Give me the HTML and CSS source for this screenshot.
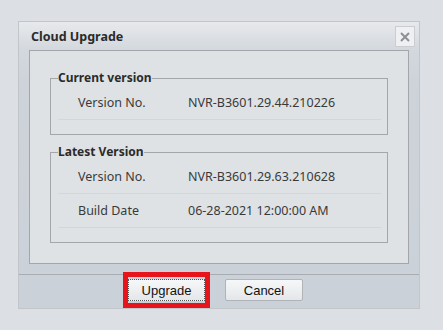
FILE: index.html
```html
<!DOCTYPE html>
<html lang="en">
<head>
  <meta charset="UTF-8">
  <title>Cloud Upgrade</title>
  <link rel="stylesheet" href="styles.css">
</head>
<body>
  <div class="dialog">
    <div class="title-bar">
      <span class="title">Cloud Upgrade</span>
      <button class="close-btn" title="Close">
        <svg width="10" height="10" viewBox="0 0 10 10"><path d="M1 1 L9 9 M9 1 L1 9" stroke="#8c9094" stroke-width="2"/></svg>
      </button>
    </div>

    <div class="panel">
      <fieldset class="group">
        <legend>Current version</legend>
        <div class="row"><span class="label">Version No.</span><span class="value">NVR-B3601.29.44.210226</span></div>
      </fieldset>
      <fieldset class="group">
        <legend>Latest Version</legend>
        <div class="row"><span class="label">Version No.</span><span class="value">NVR-B3601.29.63.210628</span></div>
        <div class="row"><span class="label">Build Date</span><span class="value">06-28-2021 12:00:00 AM</span></div>
      </fieldset>
    </div>

    <div class="footer">
      <span class="btn-wrap">
        <button class="btn btn-focus">Upgrade</button>
        <span class="highlight"></span>
      </span>
      <button class="btn">Cancel</button>
    </div>
  </div>
</body>
</html>
```

FILE: styles.css
```css
body {
  margin: 0;
  padding: 21px 0 0 18px;
  background-color: #dcdfe3;
  font-family: 'Noto Sans', 'Open Sans', sans-serif;
  color: #3a3a3a;
}
.dialog {
  width: 400px;
  border: 1px solid #c2c6ca;
  background: linear-gradient(#e7e9ec 0, #d3d8de 28px, #cdd3d9 60px, #cbd1d8);
}
.title-bar {
  height: 28px;
  display: flex;
  align-items: flex-start;
  justify-content: space-between;
  padding: 0 4px 0 12px;
}
.title {
  font-size: 12.5px;
  font-weight: bold;
  color: #2b2b2b;
  line-height: 20px;
  margin-top: 5px;
}
.close-btn {
  width: 20px;
  height: 21px;
  margin-top: 4px;
  padding: 0;
  border: 1px solid #c9cdd1;
  background-color: #eef0f2;
  display: flex;
  align-items: center;
  justify-content: center;
}
.panel {
  margin: 0 10px;
  border: 1px solid #a3a7ab;
  background-color: #dfe2e5;
  padding: 19px 20px 20px;
}
.group {
  margin: 0;
  padding: 0 6px 14px 7px;
  border: 1px solid #a3a7ab;
}
.group + .group {
  margin-top: 9px;
}
.group legend {
  padding: 0;
  font-size: 12px;
  font-weight: bold;
  line-height: 16px;
  color: #2b2b2b;
}
.row {
  height: 33px;
  border-bottom: 1px solid #d3d6da;
  display: flex;
  align-items: center;
  font-size: 12.5px;
}
.label {
  width: 110px;
  padding-left: 20px;
}
.footer {
  margin-top: 10px;
  border-top: 1px solid #a9adb1;
  height: 34px;
  padding: 4px 7px 0 0;
  box-sizing: border-box;
  display: flex;
  align-items: flex-start;
  justify-content: center;
  gap: 20px;
}
.btn-wrap {
  position: relative;
  display: inline-block;
}
.btn {
  display: block;
  width: 78px;
  height: 22px;
  padding: 0;
  font-family: 'Liberation Sans', Arial, sans-serif;
  font-size: 13px;
  color: #111;
  border: 1px solid #b0b4b8;
  border-radius: 2px;
  background: linear-gradient(#f6f7f8, #e4e7ea);
}
.btn-focus {
  width: 77px;
  border: 1px dotted #555;
  border-radius: 0;
}
.highlight {
  position: absolute;
  top: -7px;
  bottom: -7px;
  left: -5px;
  right: -5px;
  border: 5px solid #e8141c;
}
```
